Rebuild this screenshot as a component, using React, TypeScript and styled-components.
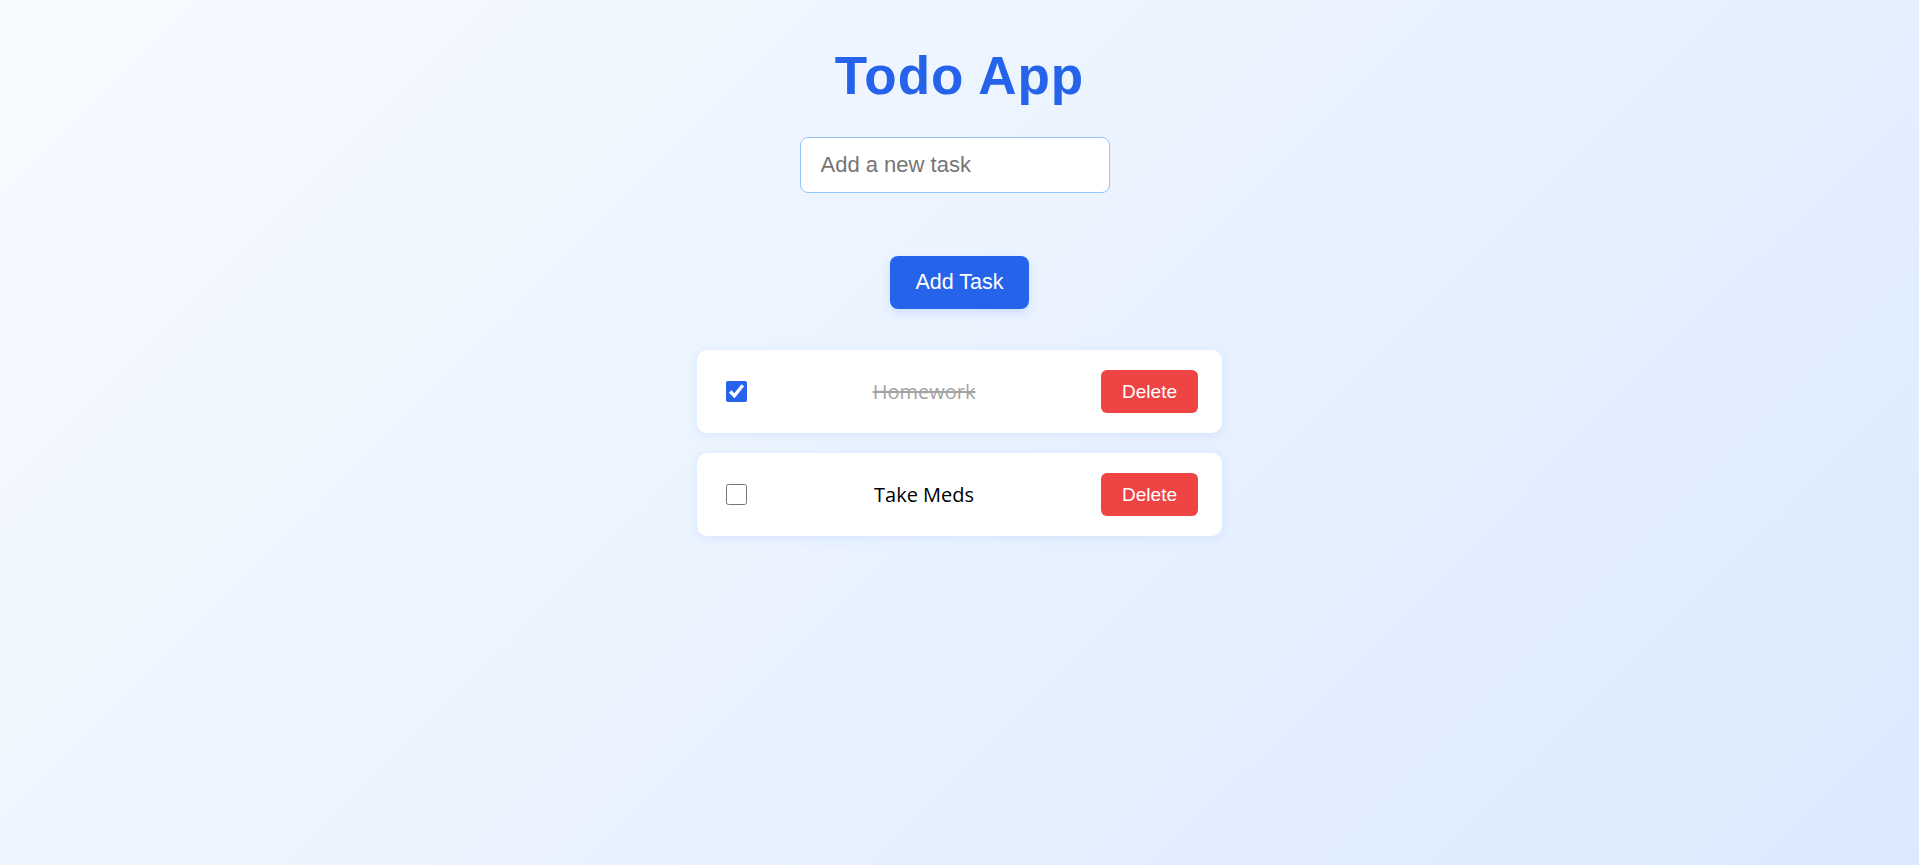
import React, { FC, useState, ChangeEvent } from 'react';
import styled, { createGlobalStyle } from 'styled-components';

const GlobalStyle = createGlobalStyle`
  html, body {
    margin: 0;
    padding: 0;
  }

  body {
    min-height: 100vh;
    background: linear-gradient(135deg, #f8fbff 0%, #dbeafe 100%);
    font-family: "Open Sans", "Noto Sans", sans-serif;
  }
`;

const Page = styled.main`
  min-height: 100vh;
  display: flex;
  flex-direction: column;
  align-items: center;
  padding-top: 46px;
  box-sizing: border-box;
`;

const Title = styled.h1`
  margin: 0 0 31px;
  font-family: "Liberation Sans", Arial, sans-serif;
  font-size: 53px;
  font-weight: 700;
  line-height: 60px;
  letter-spacing: 1px;
  color: #2563eb;
`;

const TaskInput = styled.input`
  box-sizing: border-box;
  width: 310px;
  margin: 0 10px 63px 0;
  padding: 14px 20px;
  border: 1px solid #93c5fd;
  border-radius: 8px;
  background: #fff;
  font-family: "Liberation Sans", Arial, sans-serif;
  font-size: 22px;
  line-height: 26px;
  color: #222;
  outline: none;

  &::placeholder {
    color: #757575;
  }
`;

const AddButton = styled.button`
  margin: 0 0 41px;
  padding: 14px 25px;
  border: none;
  border-radius: 8px;
  background: #2563eb;
  color: #fff;
  font-family: "Liberation Sans", Arial, sans-serif;
  font-size: 21.5px;
  line-height: 25px;
  cursor: pointer;
  box-shadow: 0 4px 10px rgba(37, 99, 235, 0.15);
`;

const TaskList = styled.ul`
  list-style: none;
  margin: 0;
  padding: 0;
  width: 525px;
  display: flex;
  flex-direction: column;
  gap: 20px;
`;

const TaskRow = styled.li`
  display: flex;
  align-items: center;
  padding: 20px 24px 20px 29px;
  background: #fff;
  border-radius: 10px;
  box-shadow: 0 2px 10px rgba(147, 197, 253, 0.25);
`;

const Check = styled.input`
  width: 21px;
  height: 21px;
  margin: 0;
  accent-color: #2563eb;
  cursor: pointer;
`;

const TaskText = styled.span<{ $done: boolean }>`
  flex: 1;
  text-align: center;
  font-size: 20px;
  line-height: 27px;
  color: ${({ $done }) => ($done ? '#a3a3a3' : '#000')};
  text-decoration: ${({ $done }) => ($done ? 'line-through' : 'none')};
`;

const DeleteButton = styled.button`
  padding: 10px 21px;
  border: none;
  border-radius: 6px;
  background: #ef4444;
  color: #fff;
  font-family: "Liberation Sans", Arial, sans-serif;
  font-size: 19px;
  line-height: 23px;
  cursor: pointer;
`;

interface Task {
  id: number;
  text: string;
  done: boolean;
}

const App: FC = () => {
  const [tasks, setTasks] = useState<Task[]>([
    { id: 1, text: 'Homework', done: true },
    { id: 2, text: 'Take Meds', done: false }
  ]);
  const [draft, setDraft] = useState('');

  const addTask = (): void => {
    const text = draft.trim();
    if (!text) return;
    setTasks((prev) => [...prev, { id: Date.now(), text, done: false }]);
    setDraft('');
  };

  const toggle = (id: number): void => {
    setTasks((prev) => prev.map((t) => (t.id === id ? { ...t, done: !t.done } : t)));
  };

  const remove = (id: number): void => {
    setTasks((prev) => prev.filter((t) => t.id !== id));
  };

  return (
    <>
      <GlobalStyle />
      <Page>
        <Title>Todo App</Title>
        <TaskInput
          placeholder="Add a new task"
          value={draft}
          onChange={(e: ChangeEvent<HTMLInputElement>) => setDraft(e.target.value)}
        />
        <AddButton onClick={addTask}>Add Task</AddButton>
        <TaskList>
          {tasks.map((task) => (
            <TaskRow key={task.id}>
              <Check type="checkbox" checked={task.done} onChange={() => toggle(task.id)} />
              <TaskText $done={task.done}>{task.text}</TaskText>
              <DeleteButton onClick={() => remove(task.id)}>Delete</DeleteButton>
            </TaskRow>
          ))}
        </TaskList>
      </Page>
    </>
  );
};

export default App;
